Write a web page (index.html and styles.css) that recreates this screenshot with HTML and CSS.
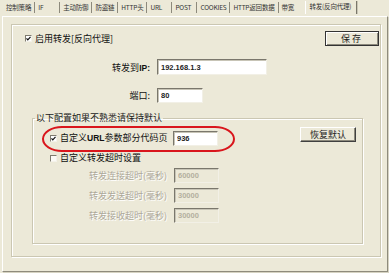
FILE: index.html
```html
<!DOCTYPE html>
<html lang="zh-CN">
<head>
  <meta charset="UTF-8" />
  <title>转发(反向代理)</title>
  <link rel="stylesheet" href="styles.css">
</head>
<body>
  <div class="tabs">
    <span class="tab">控制策略</span>
    <span class="tab">IF</span>
    <span class="tab">主动防御</span>
    <span class="tab">防盗链</span>
    <span class="tab">HTTP头</span>
    <span class="tab">URL</span>
    <span class="tab">POST</span>
    <span class="tab">COOKIES</span>
    <span class="tab">HTTP返回数据</span>
    <span class="tab tab-plain">带宽</span>
    <span class="tab tab-active">转发(反向代理)</span>
  </div>

  <div class="panel">
    <div class="group">
      <div class="row-top">
        <label class="check">
          <span class="box"><svg width="5" height="5" viewBox="0 0 5 5"><polyline points="0.5,2.3 1.8,3.8 4.5,0.8" fill="none" stroke="#111" stroke-width="1.2"/></svg></span>
          启用转发[反向代理]
        </label>
        <button class="btn btn-save">保存</button>
      </div>

      <div class="field field-ip">
        <span class="field-label">转发到<b>IP:</b></span>
        <input class="text text-ip" value="192.168.1.3">
      </div>
      <div class="field field-port">
        <span class="field-label">端口:</span>
        <input class="text text-port" value="80">
      </div>

      <fieldset class="sub">
        <legend>以下配置如果不熟悉请保持默认</legend>
        <div class="sub-row">
          <label class="check check-url">
            <span class="box"><svg width="5" height="5" viewBox="0 0 5 5"><polyline points="0.5,2.3 1.8,3.8 4.5,0.8" fill="none" stroke="#111" stroke-width="1.2"/></svg></span>
            自定义<b>URL</b>参数部分代码页
          </label>
          <input class="text text-small text-code" value="936">
          <button class="btn btn-reset">恢复默认</button>
          <div class="mark"></div>
        </div>

        <label class="check check-timeout">
          <span class="box box-empty"></span>
          自定义转发超时设置
        </label>

        <div class="field field-dim">
          <span class="field-label">转发连接超时(毫秒)</span>
          <input class="text text-small" value="60000" disabled>
        </div>
        <div class="field field-dim">
          <span class="field-label">转发发送超时(毫秒)</span>
          <input class="text text-small" value="30000" disabled>
        </div>
        <div class="field field-dim">
          <span class="field-label">转发接收超时(毫秒)</span>
          <input class="text text-small" value="30000" disabled>
        </div>
      </fieldset>
    </div>
  </div>
</body>
</html>
```

FILE: styles.css
```css
body {
  margin: 0;
  background: #ece9d8;
  font-family: "Noto Sans CJK SC", "Liberation Sans", sans-serif;
  font-size: 9px;
  color: #111;
  width: 389px;
  height: 273px;
  overflow: hidden;
}

/* Tabs */
.tabs {
  display: flex;
  height: 16px;
  padding-left: 3px;
  font-size: 6.5px;
  line-height: 10px;
  color: #333;
}
.tab {
  box-sizing: border-box;
  min-width: 25px;
  margin-top: 2px;
  height: 11px;
  padding: 0 3px;
  border-right: 1px solid #8d8a7c;
  white-space: nowrap;
  letter-spacing: -0.2px;
}
.tab-plain {
  border-right: none;
  min-width: 24px;
}
.tab-active {
  margin-top: 1px;
  height: 13px;
  margin-left: 2px;
  padding: 0 5px 0 4px;
  border-left: 1px solid #fff;
  border-right: 1px solid #7a776a;
  box-shadow: 1px 0 0 #c9c6b6;
}

/* Panel and group boxes */
.panel {
  box-sizing: border-box;
  height: 256px;
  margin: 0 1px 0 2px;
  border: 1px solid;
  border-color: #fff #8e8b7c #8e8b7c #fff;
  box-shadow: 1px 1px 0 #d6d3c2;
  padding: 7px 6px 0 8px;
}
.group {
  box-sizing: border-box;
  height: 233px;
  border: 1px solid #cbc7b2;
  box-shadow: inset 1px 1px 0 #fff, 1px 1px 0 #fff;
  display: flex;
  flex-direction: column;
}

.row-top {
  display: flex;
  align-items: center;
  height: 15px;
  margin-top: 6px;
  padding-left: 13px;
}

.check {
  display: flex;
  align-items: center;
  height: 10px;
  line-height: 10px;
  white-space: nowrap;
}
.check b {
  font-family: "Liberation Sans", sans-serif;
  font-size: 8.5px;
}
.box {
  box-sizing: border-box;
  width: 7px;
  height: 7px;
  margin-right: 3px;
  background: #fff;
  border: 1px solid;
  border-color: #7e7b6e #f4f2ea #f4f2ea #7e7b6e;
  display: flex;
  align-items: center;
  justify-content: center;
}
.box svg {
  display: block;
}
.box-empty {
  background: #fbfaf6;
}

/* Buttons */
.btn {
  box-sizing: border-box;
  height: 15px;
  padding: 0;
  font-family: "Noto Sans CJK SC", sans-serif;
  font-size: 9px;
  line-height: 12px;
  color: #222;
  background: #ece9d8;
  border: 1px solid;
  border-color: #fff #404040 #404040 #fff;
  box-shadow: inset -1px -1px 0 #8c897c;
}
.btn-save {
  width: 54px;
  margin-left: auto;
  margin-right: 1px;
  border-color: #333;
  box-shadow: inset 1px 1px 0 #fff, inset -1px -1px 0 #8c897c;
  letter-spacing: 2px;
}
.btn-reset {
  width: 56px;
  margin-left: 82px;
  align-self: flex-start;
}

/* Form rows */
.field {
  display: flex;
  align-items: center;
  gap: 7px;
}
.field-label {
  width: 138px;
  text-align: right;
  white-space: nowrap;
}
.field-label b {
  font-family: "Liberation Sans", sans-serif;
  font-size: 8.5px;
}
.field-ip {
  margin-top: 13px;
  height: 16px;
}
.field-port {
  margin-top: 13px;
  height: 15px;
}

.text {
  box-sizing: border-box;
  height: 100%;
  padding: 0 0 0 3px;
  font-family: "Liberation Sans", sans-serif;
  font-weight: bold;
  font-size: 7.5px;
  color: #222;
  background: #fff;
  border: 1px solid;
  border-color: #7a776c #f2f0e6 #f2f0e6 #7a776c;
  box-shadow: inset 1px 1px 0 #c7c4b6;
  outline: none;
}
.text-ip {
  width: 110px;
}
.text-port {
  width: 46px;
}
.text-small {
  width: 45px;
  height: 15px;
}
.text:disabled {
  background: #ece9d8;
  color: #b4b09f;
}

/* Inner group */
.sub {
  position: relative;
  margin: 9px 17px 0 20px;
  padding: 0 0 20px 0;
  border: 1px solid #cbc7b2;
  box-shadow: inset 1px 1px 0 #fff, 1px 1px 0 #fff;
}
.sub legend {
  padding: 0 1px;
  margin-left: 2px;
  line-height: 12px;
  color: #222;
}
.sub-row {
  position: relative;
  display: flex;
  height: 19px;
  margin-top: 3px;
}
.check-url {
  width: 123px;
  margin: 6px 0 0 17px;
}
.text-code {
  margin-top: 4px;
}
.mark {
  position: absolute;
  left: 9px;
  top: -1px;
  width: 193px;
  height: 26px;
  box-sizing: border-box;
  border: 2px solid #d9161c;
  border-radius: 20px / 13px;
}
.check-timeout {
  margin: 7px 0 0 17px;
}
.field-dim {
  height: 15px;
  margin-top: 5px;
}
.field-dim .field-label {
  width: 134px;
  color: #aca899;
  text-shadow: 1px 1px 0 #fff;
}
```
